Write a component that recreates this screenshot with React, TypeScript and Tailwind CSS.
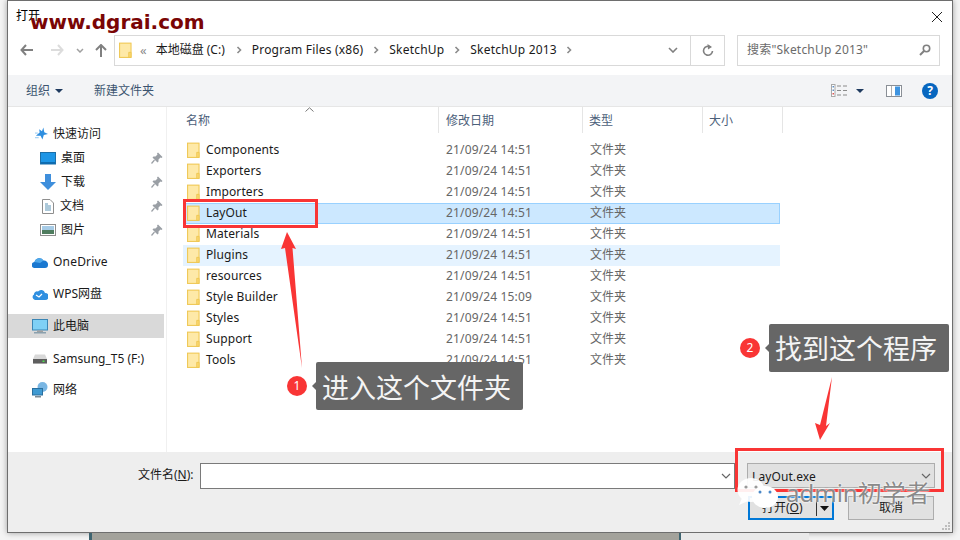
import React from "react";

const FONT = "font-['Noto_Sans','Noto_Sans_CJK_SC',sans-serif]";

function Folder({ small }: { small?: boolean }) {
  return (
    <svg width={small ? 13 : 14} height={17} viewBox="0 0 14 17" className="shrink-0">
      <rect x="0.5" y="0.5" width="12.5" height="15.5" fill="#fde28c" stroke="#eec652" />
      <rect x="1.5" y="1.5" width="10.5" height="13.5" fill="#fee9a8" />
      <path d="M10.5 16V10.5H13V16Z" fill="#fbd970" stroke="#eec652" strokeWidth="1" />
    </svg>
  );
}

const Chev = () => (
  <svg width="6" height="8" viewBox="0 0 6 8" className="shrink-0">
    <path d="M1.5 1L4.5 4L1.5 7" fill="none" stroke="#8a8a8a" strokeWidth="1.6" />
  </svg>
);

const Pin = () => (
  <svg width="12" height="12" viewBox="0 0 12 12" className="ml-auto mr-[3px] shrink-0">
    <path d="M7 0.5L11.5 5L10.5 6L9.5 5.5L7.5 7.5L7.5 9.5L6.5 10.5L1.5 5.5L2.5 4.5L4.5 4.5L6.5 2.5L6 1.5Z" fill="#9a9fa5" />
    <path d="M3.5 8L0.5 11.5" stroke="#9a9fa5" strokeWidth="1.2" />
  </svg>
);

const rows: [string, string][] = [
  ["Components", "21/09/24 14:51"],
  ["Exporters", "21/09/24 14:51"],
  ["Importers", "21/09/24 14:51"],
  ["LayOut", "21/09/24 14:51"],
  ["Materials", "21/09/24 14:51"],
  ["Plugins", "21/09/24 14:51"],
  ["resources", "21/09/24 14:51"],
  ["Style Builder", "21/09/24 15:09"],
  ["Styles", "21/09/24 14:51"],
  ["Support", "21/09/24 14:51"],
  ["Tools", "21/09/24 14:51"],
];

function Sidebar() {
  return (
    <div className="w-[159px] shrink-0 border-r border-[#f0f0f0] pt-[15px] text-[12px] text-[#1a1a1a]">
      <div className="flex h-6 items-center pl-[27px] gap-[5px]">
        <svg width="13" height="14" viewBox="0 0 14 14" className="shrink-0">
          <path d="M9 0L10 5L14 7L9.5 8L8 13L6 9L1 9L5 5.5L4.5 2L7.5 4Z" fill="#2f8fe0" />
          <path d="M0 6H3M0 11H4" stroke="#8cc4f0" strokeWidth="1" />
        </svg>
        <span>快速访问</span>
      </div>
      <div className="flex h-6 items-center pl-[32px] gap-[5px]">
        <svg width="16" height="13" viewBox="0 0 16 13" className="shrink-0">
          <rect x="0.5" y="0.5" width="15" height="11.5" fill="#1e96e6" stroke="#1c6fa8" />
          <rect x="1" y="10" width="14" height="2" fill="#0f6cb0" />
        </svg>
        <span>桌面</span>
        <Pin />
      </div>
      <div className="flex h-6 items-center pl-[32px] gap-[5px]">
        <svg width="16" height="16" viewBox="0 0 16 16" className="shrink-0">
          <path d="M5 0H11V8H16L8 16L0 8H5Z" fill="#3f8fdc" />
        </svg>
        <span>下载</span>
        <Pin />
      </div>
      <div className="flex h-6 items-center pl-[34px] gap-[6px]">
        <svg width="12" height="15" viewBox="0 0 12 15" className="shrink-0">
          <path d="M0.5 0.5H8L11.5 4V14.5H0.5Z" fill="#fff" stroke="#8e8e8e" />
          <path d="M3 5H6M3 7H9M3 9H9M3 11H9" stroke="#5b93b5" strokeWidth="1" />
        </svg>
        <span>文档</span>
        <Pin />
      </div>
      <div className="flex h-6 items-center pl-[32px] gap-[5px]">
        <svg width="16" height="12" viewBox="0 0 16 12" className="shrink-0">
          <rect x="0.5" y="0.5" width="15" height="11" fill="#fff" stroke="#8e8e8e" />
          <rect x="2" y="2" width="12" height="4" fill="#a6cbe6" />
          <rect x="2" y="6" width="12" height="4" fill="#4f7d5f" />
        </svg>
        <span>图片</span>
        <Pin />
      </div>
      <div className="mt-2 flex h-6 items-center pl-[24px] gap-[5px]">
        <svg width="16" height="11" viewBox="0 0 16 11" className="shrink-0">
          <path d="M3 11A3 3 0 0 1 2.5 5A5 5 0 0 1 11.5 3.5A4 4 0 0 1 16 8A3 3 0 0 1 13 11Z" fill="#1a78d0" />
          <path d="M2.5 5A5 5 0 0 1 11.5 3.5L8 6Z" fill="#4fa8ea" />
        </svg>
        <span className="tracking-[0.2px]">OneDrive</span>
      </div>
      <div className="mt-2 flex h-6 items-center pl-[24px] gap-[5px]">
        <svg width="16" height="12" viewBox="0 0 16 12" className="shrink-0">
          <path d="M3 12A3 3 0 0 1 2 6.5A3 3 0 0 1 6 3.5A4 4 0 0 1 13 5A3.5 3.5 0 0 1 13 12Z" fill="#2f8fe0" />
          <path d="M4 7L7 9L10 6" fill="none" stroke="#fff" strokeWidth="1.2" />
        </svg>
        <span>WPS网盘</span>
      </div>
      <div className="mt-2 flex h-6 items-center pl-[24px] gap-[5px] bg-[#d9d9d9] mr-[2px]">
        <svg width="16" height="15" viewBox="0 0 16 15" className="shrink-0">
          <rect x="0.5" y="0.5" width="15" height="10.5" fill="#7fd0f5" stroke="#3b86b5" />
          <rect x="5" y="11.5" width="6" height="1.5" fill="#a0a0a0" />
          <rect x="2" y="13" width="12" height="1.5" fill="#8aa0ad" />
        </svg>
        <span>此电脑</span>
      </div>
      <div className="mt-[9px] flex h-6 items-center pl-[25px] gap-[6px]">
        <svg width="14" height="10" viewBox="0 0 14 10" className="shrink-0">
          <path d="M2 0.5H12L14 5V9.5H0V5Z" fill="#d8d8d8" />
          <rect x="0" y="5" width="14" height="4.5" fill="#5e5e5e" />
          <rect x="9.5" y="6.5" width="2" height="1.5" fill="#4ee04e" />
        </svg>
        <span>Samsung_T5 (F:)</span>
      </div>
      <div className="mt-[7px] flex h-6 items-center pl-[24px] gap-[5px]">
        <svg width="16" height="16" viewBox="0 0 16 16" className="shrink-0">
          <circle cx="10.5" cy="5" r="5" fill="#79b6e3" />
          <rect x="0.5" y="6.5" width="10" height="6.5" fill="#3f9ad2" stroke="#2a6f9e" />
          <rect x="3" y="14" width="6" height="1.5" fill="#7a8a95" />
        </svg>
        <span>网络</span>
      </div>
    </div>
  );
}

function FileList() {
  return (
    <div className="flex-1 min-w-0">
      <div className="flex h-[27px] pb-[1px] text-[12px] text-[#4c607a] relative">
        <div className="w-[272px] shrink-0 border-r border-[#e5e5e5] pl-[19px] pt-[5px]">名称</div>
        <div className="w-[144px] shrink-0 border-r border-[#e5e5e5] pl-[7px] pt-[5px]">修改日期</div>
        <div className="w-[120px] shrink-0 border-r border-[#e5e5e5] pl-[6px] pt-[5px]">类型</div>
        <div className="w-[80px] shrink-0 border-r border-[#e5e5e5] pl-[6px] pt-[5px]">大小</div>
        <svg width="9" height="5" viewBox="0 0 9 5" className="absolute left-[138px] top-0">
          <path d="M0.5 4.5L4.5 0.8L8.5 4.5" fill="none" stroke="#777" />
        </svg>
      </div>
      <div className="ml-4 mt-[6px] w-[597px] text-[12px]">
        {rows.map(([name, date]) => {
          const bg =
            name === "LayOut"
              ? "bg-[#cce8ff] border border-[#99d1ff]"
              : name === "Plugins"
                ? "bg-[#e5f3ff] border border-[#e5f3ff]"
                : "border border-transparent";
          return (
            <div key={name} className={`flex h-[21px] items-center ${bg}`}>
              <div className="ml-[3px]"><Folder small /></div>
              <span className="-mt-[2px] ml-[6px] w-[240px] shrink-0 text-[#1a1a1a] tracking-[0.1px]">{name}</span>
              <span className="-mt-[1px] w-[144px] shrink-0 text-[#666666] text-[12px] tracking-[0.15px]">{date}</span>
              <span className="-mt-[2px] text-[#666666]">文件夹</span>
            </div>
          );
        })}
      </div>
    </div>
  );
}

function Annotations() {
  return (
    <>
      {/* top watermark */}
      <div className="absolute left-[30px] top-[7px] font-['DejaVu_Sans',sans-serif] font-bold text-[20px] leading-[30px] text-[#7a0505]">
        www.dgrai.com
      </div>

      {/* red frames */}
      <div className="absolute left-[183px] top-[199px] h-[29px] w-[135px] border-[3px] border-[#f93535]" />
      <div className="absolute left-[735px] top-[448px] h-[44px] w-[209px] border-[3px] border-[#f93535]" />

      {/* arrows */}
      <svg width="960" height="540" viewBox="0 0 960 540" className="absolute left-0 top-0 pointer-events-none">
        <path d="M287 232L296 249L292.5 248L302 368L285 248L281 249Z" fill="#f93535" />
        <path d="M832 377L826 426L830 423L820 440L815 423L820 425Z" fill="#f93535" />
      </svg>

      {/* label 1 */}
      <div className="absolute left-[287px] top-[362px] flex items-center">
        <div className="flex h-5 w-5 items-center justify-center rounded-full bg-[#f93535] text-[12px] text-white">1</div>
        <div className="ml-[5px] h-0 w-0 border-y-[4px] border-r-[4px] border-y-transparent border-r-[#666666]" />
        <div className="flex h-12 w-[207px] items-center rounded-[2px] bg-[#666666] pl-[6px] pt-[4px] text-[27px] text-[#f4f4f4]">进入这个文件夹</div>
      </div>

      {/* label 2 */}
      <div className="absolute left-[740px] top-[324px] flex items-center">
        <div className="flex h-5 w-5 items-center justify-center rounded-full bg-[#f93535] text-[12px] text-white">2</div>
        <div className="ml-[5px] h-0 w-0 border-y-[4px] border-r-[4px] border-y-transparent border-r-[#666666]" />
        <div className="flex h-12 w-[180px] items-center rounded-[2px] bg-[#666666] pl-[6px] pt-[3px] text-[27px] text-[#f4f4f4]">找到这个程序</div>
      </div>

      {/* wechat watermark */}
      <svg width="46" height="32" viewBox="0 0 46 32" className="absolute left-[737px] top-[477px]">
        <ellipse cx="14" cy="13" rx="13.5" ry="12" fill="#ffffff" fillOpacity="0.92" />
        <path d="M5 21L2 28L11 24Z" fill="#ffffff" fillOpacity="0.92" />
        <circle cx="9" cy="10" r="1.6" fill="#9a9a9a" />
        <circle cx="19" cy="10" r="1.6" fill="#9a9a9a" />
        <ellipse cx="28" cy="20" rx="13" ry="11" fill="#ffffff" />
        <circle cx="23" cy="15" r="1.5" fill="#4b88c7" />
        <circle cx="33" cy="15" r="1.5" fill="#4b88c7" />
      </svg>
      <div className="absolute left-[786px] top-[478px] text-[24px] leading-[30px] text-[#8a8a8a] [text-shadow:0_0_2px_#ffffff,0_0_2px_#ffffff]">
        admin初学者
      </div>
    </>
  );
}

export default function App() {
  return (
    <div className={`relative h-[540px] w-[960px] overflow-hidden bg-[#f4f4f4] ${FONT}`}>
      <div className="ml-[7px] flex h-[533px] w-[946px] flex-col border border-[#6e6e6e] bg-white shadow-[0_0_6px_rgba(0,0,0,0.35)]">
        {/* title */}
        <div className="flex h-[31px] shrink-0 items-center justify-between pl-2 pr-[8px] text-[12px] text-black">
          <span className="-mt-[1px]">打开</span>
          <svg width="12" height="12" viewBox="0 0 12 12" className="mr-[1px]">
            <path d="M1 1L11 11M11 1L1 11" stroke="#222" strokeWidth="1" />
          </svg>
        </div>

        {/* nav */}
        <div className="flex h-[43px] shrink-0 items-center pb-[7px] pl-[12px] pr-[12px]">
          <svg width="14" height="12" viewBox="0 0 14 12" className="shrink-0">
            <path d="M6 1L1.5 6L6 11M2 6H13" fill="none" stroke="#808080" strokeWidth="2" />
          </svg>
          <svg width="14" height="12" viewBox="0 0 14 12" className="ml-[16px] shrink-0">
            <path d="M8 1L12.5 6L8 11M12 6H1" fill="none" stroke="#dcdcdc" strokeWidth="2" />
          </svg>
          <svg width="8" height="5" viewBox="0 0 8 5" className="ml-[12px] shrink-0">
            <path d="M1 1L4 4L7 1" fill="none" stroke="#a0a0a0" strokeWidth="1.5" />
          </svg>
          <svg width="12" height="13" viewBox="0 0 12 13" className="ml-[11px] shrink-0">
            <path d="M1 6L6 1L11 6M6 1.5V13" fill="none" stroke="#808080" strokeWidth="2" />
          </svg>
          <div className="ml-[7px] flex h-[31px] w-[611px] shrink-0 items-center border border-[#d9d9d9] pl-[4px] text-[12px] text-[#1a1a1a]">
            <Folder small />
            <span className="ml-[8px] text-[#8a8a8a] text-[13px] leading-none">«</span>
            <span className="ml-[9px]">本地磁盘 (C:)</span>
            <span className="ml-[11px] mr-[10px]"><Chev /></span>
            <span className="tracking-[0.2px]">Program Files (x86)</span>
            <span className="mx-[10px]"><Chev /></span>
            <span className="tracking-[0.2px]">SketchUp</span>
            <span className="mx-[10px]"><Chev /></span>
            <span className="tracking-[0.2px]">SketchUp 2013</span>
            <span className="ml-[9px]"><Chev /></span>
            <svg width="10" height="6" viewBox="0 0 10 6" className="ml-auto mr-[12px] shrink-0">
              <path d="M1 1L5 5L9 1" fill="none" stroke="#808080" strokeWidth="1.6" />
            </svg>
            <div className="flex h-full w-[34px] shrink-0 items-center justify-center border-l border-[#d9d9d9]">
              <svg width="12" height="13" viewBox="0 0 12 13">
                <path d="M8.5 3A4.5 4.5 0 1 0 10.5 7" fill="none" stroke="#808080" strokeWidth="1.6" />
                <path d="M5.5 0L10 3L6 5.5Z" fill="#808080" />
              </svg>
            </div>
          </div>
          <div className="ml-[12px] flex h-[31px] flex-1 items-center justify-between border border-[#d9d9d9] pl-[9px] pr-[8px] text-[12px] text-[#6b6b6b] tracking-[0.2px]">
            <span>搜索"SketchUp 2013"</span>
            <svg width="12" height="12" viewBox="0 0 12 12">
              <circle cx="7.5" cy="4.5" r="3.2" fill="none" stroke="#808080" strokeWidth="1.6" />
              <path d="M5 7L1 11" stroke="#808080" strokeWidth="2" />
            </svg>
          </div>
        </div>

        {/* toolbar */}
        <div className="flex h-[32px] shrink-0 items-center border-b border-[#e6e6e6] bg-[#f3f4f6] pl-[18px] pr-[14px] text-[12px] text-[#3c5470]">
          <span>组织</span>
          <svg width="8" height="4" viewBox="0 0 8 4" className="ml-[5px]"><path d="M0 0H8L4 4Z" fill="#1f3a5f" /></svg>
          <span className="ml-[31px]">新建文件夹</span>
          <div className="ml-auto flex items-center">
            <svg width="16" height="13" viewBox="0 0 16 13">
              <rect x="0.5" y="0.5" width="3.5" height="12" fill="#fff" stroke="#a8a8a8" />
              <rect x="1.5" y="2" width="1.5" height="1.5" fill="#5f8fc5" />
              <rect x="1.5" y="5.5" width="1.5" height="1.5" fill="#5f8fc5" />
              <rect x="1.5" y="9" width="1.5" height="1.5" fill="#e05555" />
              <path d="M6 2H10M12 2H16M6 6.5H10M12 6.5H16M6 11H10M12 11H16" stroke="#8a8a8a" strokeWidth="1" />
            </svg>
            <svg width="8" height="4" viewBox="0 0 8 4" className="ml-[9px]"><path d="M0 0H8L4 4Z" fill="#1f3a5f" /></svg>
            <svg width="16" height="12" viewBox="0 0 16 12" className="ml-[22px]">
              <rect x="0.5" y="0.5" width="15" height="11" fill="#fff" stroke="#8a8f96" />
              <rect x="9" y="1.5" width="5" height="9" fill="#3f94e0" />
              <rect x="5" y="1" width="1" height="10" fill="#b0b0b0" />
            </svg>
            <div className="ml-[20px] flex h-4 w-4 items-center justify-center rounded-full bg-[#0766bf] text-[12px] font-bold leading-none text-white">?</div>
          </div>
        </div>

        {/* middle */}
        <div className="flex min-h-0 flex-1">
          <Sidebar />
          <FileList />
        </div>

        {/* bottom */}
        <div className="relative h-[80px] shrink-0 bg-[#eeeeee] pt-[11px]">
          <div className="flex items-start">
            <span className="ml-[130px] mt-[3px] w-[61px] shrink-0 whitespace-nowrap text-[12px] text-[#1a1a1a]">
              文件名(<span className="underline">N</span>):
            </span>
            <div className="ml-[1px] flex h-[26px] w-[535px] shrink-0 items-center justify-end border border-[#7a7a7a] bg-white pr-[3px]">
              <svg width="10" height="6" viewBox="0 0 10 6"><path d="M1 1L5 5L9 1" fill="none" stroke="#666" strokeWidth="1.2" /></svg>
            </div>
            <div className="ml-[12px] flex h-[25px] w-[188px] shrink-0 items-center justify-between border border-[#adadad] bg-[#e1e1e1] pl-[4px] pr-[3px] text-[12px] tracking-[0.1px] text-[#1a1a1a]">
              <span className="mt-[2px]">LayOut.exe</span>
              <svg width="10" height="6" viewBox="0 0 10 6"><path d="M1 1L5 5L9 1" fill="none" stroke="#666" strokeWidth="1.2" /></svg>
            </div>
          </div>
          <div className="ml-[740px] mt-[7px] flex items-start text-[12px] text-[#1a1a1a]">
            <div className="flex h-6 w-[86px] shrink-0 items-center border-2 border-[#0078d7] bg-[#e1e1e1] pl-[12px]">
              <span>打开(<span className="underline">O</span>)</span>
              <div className="ml-auto flex items-center pr-[3px]">
                <div className="mr-[3px] h-4 w-px bg-[#333]" />
                <svg width="9" height="5" viewBox="0 0 9 5"><path d="M0 0H9L4.5 5Z" fill="#111" /></svg>
              </div>
            </div>
            <div className="ml-[14px] flex h-6 w-[86px] shrink-0 items-center justify-center border border-[#adadad] bg-[#e1e1e1]">取消</div>
          </div>
          <svg width="10" height="10" viewBox="0 0 10 10" className="absolute bottom-[1px] right-[1px]">
            <path d="M7 1h2v2H7zM4 4h2v2H4zM7 4h2v2H7zM1 7h2v2H1zM4 7h2v2H4zM7 7h2v2H7z" fill="#bdbdbd" />
          </svg>
        </div>
      </div>

      {/* below dialog */}
      <div className="flex h-[7px]">
        <div className="ml-[89px] h-full w-[3px] bg-[#3e6470]" />
        <div className="h-full w-[587px] bg-[#a3a29b]" />
        <div className="h-full w-[2px] bg-[#3e6470]" />
        <div className="h-full w-[128px] bg-[#e9e9e9]" />
      </div>

      <Annotations />
    </div>
  );
}
